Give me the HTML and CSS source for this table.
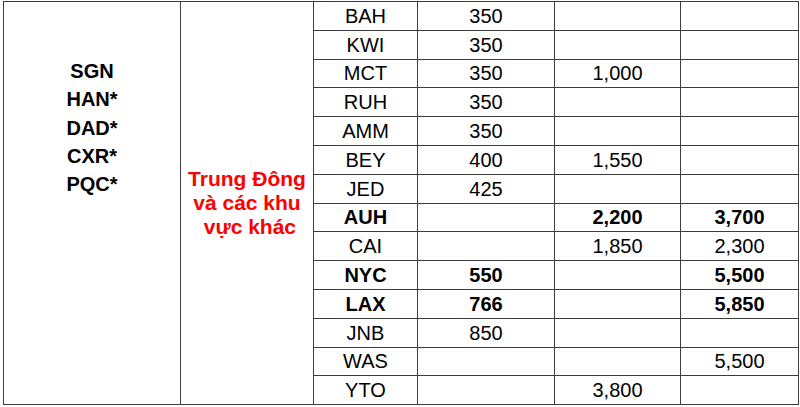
FILE: index.html
```html
<!DOCTYPE html>
<html lang="vi">
<head>
<meta charset="utf-8">
<title>Bảng giá</title>
<link rel="stylesheet" href="styles.css">
</head>
<body>
<table class="fares">
  <colgroup>
    <col class="c-origin">
    <col class="c-region">
    <col class="c-dest">
    <col class="c-a">
    <col class="c-b">
    <col class="c-c">
  </colgroup>
  <tbody>
    <tr>
      <td class="origin" rowspan="14"><div class="origin-list">SGN<br>HAN*<br>DAD*<br>CXR*<br>PQC*</div></td>
      <td class="region" rowspan="14">Trung Đông<br>và các khu<br>&nbsp;vực khác</td>
      <td>BAH</td><td>350</td><td></td><td></td>
    </tr>
    <tr><td>KWI</td><td>350</td><td></td><td></td></tr>
    <tr><td>MCT</td><td>350</td><td>1,000</td><td></td></tr>
    <tr><td>RUH</td><td>350</td><td></td><td></td></tr>
    <tr><td>AMM</td><td>350</td><td></td><td></td></tr>
    <tr><td>BEY</td><td>400</td><td>1,550</td><td></td></tr>
    <tr><td>JED</td><td>425</td><td></td><td></td></tr>
    <tr class="strong"><td>AUH</td><td></td><td>2,200</td><td>3,700</td></tr>
    <tr><td>CAI</td><td></td><td>1,850</td><td>2,300</td></tr>
    <tr class="strong"><td>NYC</td><td>550</td><td></td><td>5,500</td></tr>
    <tr class="strong"><td>LAX</td><td>766</td><td></td><td>5,850</td></tr>
    <tr><td>JNB</td><td>850</td><td></td><td></td></tr>
    <tr><td>WAS</td><td></td><td></td><td>5,500</td></tr>
    <tr><td>YTO</td><td></td><td>3,800</td><td></td></tr>
  </tbody>
</table>
</body>
</html>
```

FILE: styles.css
```css
html, body {
  margin: 0;
  padding: 0;
  background: #ffffff;
}

body {
  font-family: "Liberation Sans", Arial, sans-serif;
  color: #000000;
}

.fares {
  margin: 1px 0 0 3px;
  width: 795px;
  height: 404px;
  border-collapse: collapse;
  table-layout: fixed;
  border: 1px solid #444;
  font-size: 20px;
}

.c-origin { width: 177px; }
.c-region { width: 133px; }
.c-dest   { width: 104px; }
.c-a      { width: 137px; }
.c-b      { width: 126px; }
.c-c      { width: 118px; }

.fares tr {
  height: 28.8px;
}

.fares td {
  border: 1px solid #3c3c3c;
  padding: 0;
  text-align: center;
  vertical-align: middle;
  line-height: 22px;
  white-space: nowrap;
}

.fares td.origin {
  vertical-align: top;
  font-weight: bold;
}

.origin-list {
  padding-top: 55px;
  line-height: 28.3px;
}

.fares td.region {
  color: #ff0000;
  font-weight: bold;
  font-size: 21px;
  line-height: 24px;
}

.fares tr.strong td {
  font-weight: bold;
}
```
